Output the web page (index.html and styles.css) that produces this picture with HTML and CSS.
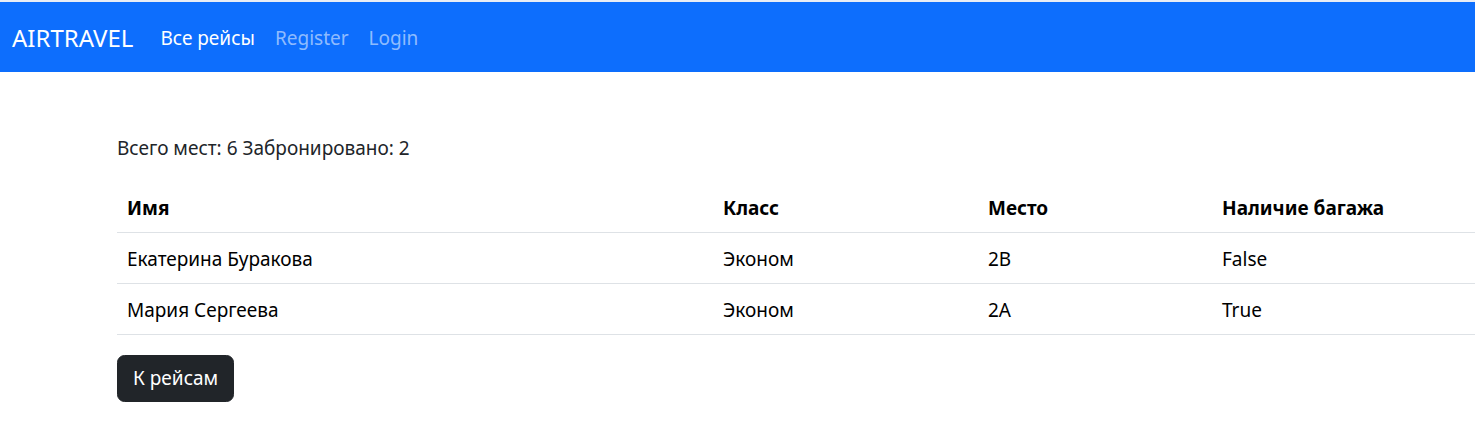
FILE: index.html
```html
<!DOCTYPE html>
<html lang="ru">
<head>
<meta charset="utf-8">
<title>AIRTRAVEL</title>
<link rel="stylesheet" href="styles.css">
</head>
<body>
<div class="topline"></div>
<nav class="navbar">
  <a class="brand" href="#">AIRTRAVEL</a>
  <ul class="nav">
    <li><a class="nav-link active" href="#">Все рейсы</a></li>
    <li><a class="nav-link" href="#">Register</a></li>
    <li><a class="nav-link" href="#">Login</a></li>
  </ul>
</nav>
<main class="content">
  <p class="summary">Всего мест: 6 Забронировано: 2</p>
  <table class="table">
    <colgroup>
      <col class="c-name">
      <col class="c-class">
      <col class="c-seat">
      <col class="c-bag">
    </colgroup>
    <thead>
      <tr><th>Имя</th><th>Класс</th><th>Место</th><th>Наличие багажа</th></tr>
    </thead>
    <tbody>
      <tr><td>Екатерина Буракова</td><td>Эконом</td><td>2B</td><td>False</td></tr>
      <tr><td>Мария Сергеева</td><td>Эконом</td><td>2A</td><td>True</td></tr>
    </tbody>
  </table>
  <a class="btn-dark" href="#">К рейсам</a>
</main>
</body>
</html>
```
FILE: styles.css
```css
html, body {
  margin: 0;
  padding: 0;
  background: #fff;
}
body {
  font-family: "Noto Sans", "Open Sans", sans-serif;
  font-size: 19px;
  line-height: 30px;
  color: #212529;
}
.topline {
  height: 2px;
  background: #e8edf5;
}
.navbar {
  box-sizing: border-box;
  height: 70px;
  background: #0d6efd;
  display: flex;
  align-items: center;
  padding: 2px 15px 0 12px;
}
.brand {
  font-size: 24px;
  line-height: 36px;
  color: #fff;
  text-decoration: none;
  margin-right: 17px;
}
.nav {
  display: flex;
  list-style: none;
  margin: 0;
  padding: 0;
}
.nav-link {
  display: block;
  padding: 8px 10px;
  color: rgba(255, 255, 255, 0.55);
  text-decoration: none;
}
.nav-link.active {
  color: #fff;
}
.content {
  padding: 61px 0 0 117px;
}
.summary {
  margin: 0 0 19px;
}
.table {
  width: 100%;
  table-layout: fixed;
  border-collapse: collapse;
  margin-bottom: 20px;
}
.c-name { width: 596px; }
.c-class { width: 265px; }
.c-seat { width: 234px; }
.table th,
.table td {
  text-align: left;
  padding: 11px 10px 9px;
  border-bottom: 1px solid #dee2e6;
  vertical-align: top;
  color: #000;
}
.table th {
  font-weight: 700;
}
.btn-dark {
  display: inline-block;
  background: #212529;
  color: #fff;
  text-decoration: none;
  line-height: 29px;
  padding: 8px 15px;
  border: 1px solid #212529;
  border-radius: 7.5px;
}
```
